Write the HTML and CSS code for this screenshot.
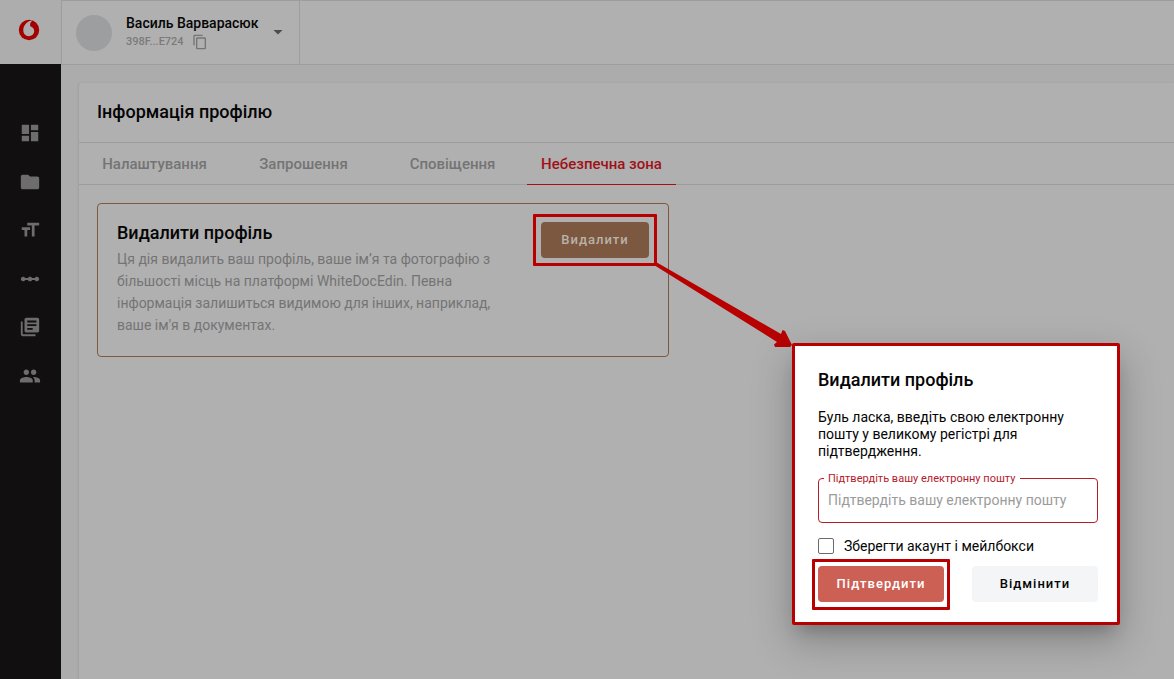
FILE: index.html
```
<!DOCTYPE html>
<html lang="uk">
<head>
<meta charset="utf-8">
<meta name="viewport" content="width=device-width, initial-scale=1">
<title>Інформація профілю</title>
<link rel="stylesheet" href="styles.css">
</head>
<body>
<div class="app">
  <aside class="side">
    <a class="logo" href="#" aria-label="Vodafone">
      <svg width="22" height="22" viewBox="0 0 22 22"><circle cx="11" cy="11" r="10.200" fill="#a50000"/><path class="logo-drop" d="M14.200 1.500C9 2 5.300 6.500 5.300 11.300C5.300 15 7.800 17.200 10.800 17.200C14 17.200 16.200 14.800 16.200 12C16.200 9.500 14.500 7.800 12.200 7.200C11.800 4.600 12.600 2.800 14.400 1.800Z"/></svg>
    </a>
    <nav class="nav">
      <a href="#" aria-label="Панель"><svg viewBox="0 0 24 24"><path d="M3 13h8V3H3v10zm0 8h8v-6H3v6zm10 0h8V11h-8v10zm0-18v6h8V3h-8z"/></svg></a>
      <a href="#" aria-label="Документи"><svg viewBox="0 0 24 24"><path d="M10 4H4c-1.100 0-2 .9-2 2v12c0 1.100.9 2 2 2h16c1.100 0 2-.9 2-2V8c0-1.100-.9-2-2-2h-8l-2-2z"/></svg></a>
      <a href="#" aria-label="Поля"><svg viewBox="0 0 24 24"><path d="M9 4v3h5v12h3V7h5V4H9zm-6 8h3v7h3v-7h3V9H3v3z"/></svg></a>
      <a href="#" aria-label="Процеси"><svg viewBox="0 0 24 24"><path d="M19.500 9.500c-1.030 0-1.900.62-2.290 1.500h-2.920c-.39-.88-1.260-1.500-2.290-1.500s-1.900.62-2.290 1.500H6.790c-.39-.88-1.260-1.500-2.290-1.500C3.120 9.500 2 10.620 2 12s1.120 2.500 2.500 2.500c1.030 0 1.900-.62 2.290-1.500h2.920c.39.88 1.260 1.500 2.290 1.500s1.900-.62 2.290-1.500h2.920c.39.88 1.260 1.500 2.290 1.500 1.380 0 2.500-1.120 2.500-2.500s-1.120-2.500-2.500-2.500z"/></svg></a>
      <a href="#" aria-label="Шаблони"><svg viewBox="0 0 24 24"><path d="M4 6H2v14c0 1.100.9 2 2 2h14v-2H4V6zm16-4H8c-1.100 0-2 .9-2 2v12c0 1.100.9 2 2 2h12c1.100 0 2-.9 2-2V4c0-1.100-.9-2-2-2zm-1 9H9V9h10v2zm-4 4H9v-2h6v2zm4-8H9V5h10v2z"/></svg></a>
      <a href="#" aria-label="Контакти"><svg viewBox="0 0 24 24"><path d="M16 11c1.660 0 2.990-1.340 2.990-3S17.660 5 16 5c-1.660 0-3 1.340-3 3s1.340 3 3 3zm-8 0c1.660 0 2.990-1.340 2.990-3S9.660 5 8 5C6.340 5 5 6.340 5 8s1.340 3 3 3zm0 2c-2.330 0-7 1.170-7 3.500V19h14v-2.500c0-2.330-4.670-3.500-7-3.500zm8 0c-.29 0-.62.020-.97.050 1.160.84 1.970 1.970 1.970 3.450V19h6v-2.500c0-2.330-4.670-3.500-7-3.500z"/></svg></a>
    </nav>
  </aside>

  <div class="main">
    <header class="topbar">
      <div class="account">
        <span class="avatar"></span>
        <div class="who">
          <div class="name">Василь Варварасюк</div>
          <div class="uid">398F...E724
            <button class="icon-btn" type="button" aria-label="Копіювати"><svg width="16" height="16" viewBox="0 0 24 24"><path d="M16 1H4c-1.100 0-2 .9-2 2v14h2V3h12V1zm3 4H8c-1.100 0-2 .9-2 2v14c0 1.100.9 2 2 2h11c1.100 0 2-.9 2-2V7c0-1.100-.9-2-2-2zm0 16H8V7h11v14z"/></svg></button>
          </div>
        </div>
        <button class="icon-btn" type="button" aria-label="Меню акаунта"><svg class="caret" width="10" height="5" viewBox="0 0 10 5"><path d="M0.500 0h9L5 4.500z"/></svg></button>
      </div>
    </header>

    <main class="panel">
      <h1 class="panel-title">Інформація профілю</h1>
      <nav class="tabs">
        <a class="tab" href="#">Налаштування</a>
        <a class="tab" href="#">Запрошення</a>
        <a class="tab" href="#">Сповіщення</a>
        <a class="tab tab-active" href="#">Небезпечна зона</a>
      </nav>
      <section class="danger">
        <div class="danger-text">
          <h2 class="heading">Видалити профіль</h2>
          <p class="note">Ця дія видалить ваш профіль, ваше ім’я та фотографію з більшості місць на платформі WhiteDocEdin. Певна інформація залишиться видимою для інших, наприклад, ваше ім'я в документах.</p>
        </div>
        <button class="btn btn-delete" type="button">Видалити</button>
      </section>
    </main>
  </div>
</div>

<svg class="arrow" width="142" height="90" viewBox="0 0 142 90" aria-hidden="true"><path d="M2 0L127 72L128.500 68L131 69L138 83L136 85L121 85L120 82.500L123 80L0 3Z"/></svg>

<form class="dialog" role="dialog" aria-labelledby="dialog-title">
  <h2 class="heading" id="dialog-title">Видалити профіль</h2>
  <p class="message">Буль ласка, введіть свою електронну пошту у великому регістрі для підтвердження.</p>
  <fieldset class="field">
    <legend class="legend"><label for="email">Підтвердіть вашу електронну пошту</label></legend>
    <input class="input" id="email" type="text" placeholder="Підтвердіть вашу електронну пошту">
  </fieldset>
  <label class="keep" for="keep"><input class="check" id="keep" type="checkbox">Зберегти акаунт і мейлбокси</label>
  <div class="actions">
    <button class="btn btn-confirm" type="button">Підтвердити</button>
    <button class="btn btn-cancel" type="button">Відмінити</button>
  </div>
</form>
</body>
</html>
```

FILE: styles.css
```
* { box-sizing: border-box; }

body {
  margin: 0;
  font-family: Roboto, "Noto Sans", sans-serif;
  font-size: 14px;
  color: #050505;
  background: #acacac;
  overflow: hidden;
}

h1, h2, p { margin: 0; }
a { color: inherit; text-decoration: none; }
button { font-family: inherit; border: 0; padding: 0; cursor: pointer; }

.app {
  display: grid;
  grid-template-columns: 61px 1fr;
  min-height: 100vh;
}

.side {
  display: flex;
  flex-direction: column;
  background: #110f10;
}
.logo {
  display: flex;
  justify-content: center;
  height: 64px;
  padding: 19px 3px 0 0;
  background: #adadad;
}
.logo-drop { fill: #adadad; }
.nav {
  display: flex;
  flex-direction: column;
  align-items: center;
  justify-content: space-between;
  height: 265px;
  margin-top: 58px;
  padding-right: 1px;
}
.nav svg {
  display: block;
  width: 22px;
  height: 22px;
  fill: #6d6d6d;
}

.main {
  display: flex;
  flex-direction: column;
  min-width: 0;
}
.topbar {
  display: flex;
  height: 65px;
  background: #b0b0b0;
  border: 1px solid #9d9d9d;
  border-right: 0;
}
.account {
  display: flex;
  align-items: center;
  gap: 14px;
  width: 238px;
  padding-left: 14px;
  border-right: 1px solid #9d9d9d;
}
.avatar {
  width: 36px;
  height: 36px;
  border-radius: 50%;
  background: #9c9e9f;
}
.name {
  font-weight: 500;
  line-height: 18px;
}
.uid {
  display: flex;
  align-items: center;
  gap: 8px;
  font-size: 11px;
  font-weight: 500;
  line-height: 20px;
  color: #7b7b7b;
}
.icon-btn {
  display: flex;
  background: none;
}
.icon-btn svg { fill: #747474; }
.icon-btn .caret { fill: #4c4c4c; }

.panel {
  flex: 1;
  margin: 18px 0 0 17px;
  background: #b0b0b0;
  border-left: 1px solid #a3a3a3;
  border-radius: 4px 0 0 0;
  box-shadow: 0 0 2px #a0a0a0;
}
.panel-title {
  padding: 0 18px 2px;
  font-size: 18px;
  font-weight: 500;
  line-height: 57px;
  border-bottom: 1px solid #9d9d9d;
}
.tabs {
  display: flex;
  padding: 0 18px 0 1px;
  border-bottom: 1px solid #9d9d9d;
}
.tab {
  width: 149px;
  margin-bottom: -1px;
  padding-top: 2px;
  font-size: 15px;
  font-weight: 500;
  line-height: 39px;
  text-align: center;
  color: #757475;
  border-bottom: 1px solid transparent;
}
.tab-active {
  color: #9f1018;
  border-color: #a80d15;
}

.danger {
  display: flex;
  justify-content: space-between;
  align-items: flex-start;
  max-width: 572px;
  margin: 18px;
  padding: 18px 19px;
  border: 1px solid #7c5840;
  border-radius: 4px;
}
.danger-text {
  max-width: 390px;
  padding-bottom: 2px;
}
.heading {
  font-size: 18px;
  font-weight: 500;
  line-height: 22px;
}
.note {
  margin-top: 4px;
  line-height: 22px;
  color: #757475;
}

.btn {
  position: relative;
  height: 36px;
  padding-bottom: 2px;
  font-size: 13px;
  font-weight: 500;
  letter-spacing: 1px;
  text-align: center;
  border-radius: 4px;
}
.btn-delete {
  width: 108px;
  color: #b9b2a8;
  background: #7c5840;
}
.btn-confirm {
  color: #fff;
  background: #cd6055;
}
.btn-cancel {
  color: #050505;
  background: #f4f5f7;
}

/* Highlight frames around the two buttons of the walkthrough */
.btn-delete::after,
.btn-confirm::after {
  content: "";
  position: absolute;
  border: 3px solid #b80000;
  border-radius: 1px;
}
.btn-delete::after { inset: -8px; }
.btn-confirm::after { inset: -7px -6px -8px; }

/* Callout from the delete button to the dialog it opens */
.arrow {
  position: absolute;
  left: 654px;
  top: 262px;
  fill: #b80000;
}

.dialog {
  position: absolute;
  left: 792px;
  top: 343px;
  width: 328px;
  padding: 23px 19px 20px 23px;
  background: #fff;
  border: 3px solid #b80000;
  border-radius: 2px;
  box-shadow: 0 11px 15px -7px rgba(0, 0, 0, .2), 0 16px 38px 3px rgba(0, 0, 0, .22);
}
.message {
  margin-top: 18px;
  line-height: 17px;
}
.field {
  min-width: 0;
  margin: 10px 0 0;
  padding: 0 5px;
  border: 1px solid #b3202c;
  border-radius: 4px;
}
.legend {
  padding: 2px 5px 0 4px;
  font-size: 11px;
  line-height: 14px;
  color: #b3202c;
}
.input {
  display: block;
  width: 100%;
  height: 36px;
  padding: 0 4px 8px;
  font: inherit;
  color: #050505;
  background: none;
  border: 0;
  outline: 0;
}
.input::placeholder {
  color: #9b9b9b;
  opacity: 1;
}
.keep {
  display: flex;
  align-items: center;
  gap: 10px;
  margin-top: 14px;
  line-height: 18px;
}
.check {
  appearance: none;
  width: 16px;
  height: 16px;
  margin: 0;
  border: 1px solid #6b6b6b;
  border-radius: 2px;
}
.check:checked { background: #b3202c; }
.actions {
  display: grid;
  grid-template-columns: 1fr 1fr;
  gap: 28px;
  margin-top: 11px;
}
```
